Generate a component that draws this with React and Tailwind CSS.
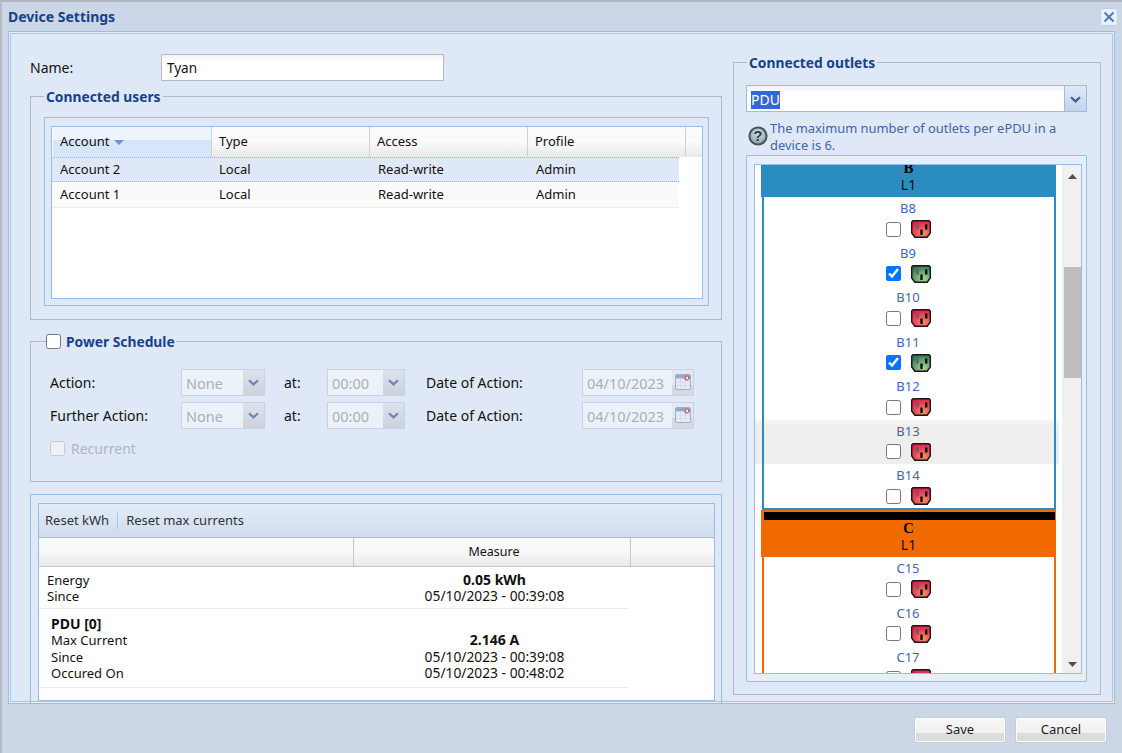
import React from "react";

const Chevron = ({ color = "#3f5f9a" }) => (
  <svg width="11" height="7" viewBox="0 0 11 7"><path d="M1 1.2 L5.5 5.4 L10 1.2" fill="none" stroke={color} strokeWidth="2.2" /></svg>
);

const Outlet = ({ on }) => {
  const id = on ? "og" : "or";
  return (
    <svg width="20" height="18" viewBox="0 0 20 18" className="shrink-0">
      <defs>
        <radialGradient id={id} cx="0.62" cy="0.78" r="0.8">
          <stop offset="0" stopColor={on ? "#a6d692" : "#f79064"} />
          <stop offset="0.5" stopColor={on ? "#6aa874" : "#e8505a"} />
          <stop offset="1" stopColor={on ? "#2f7050" : "#d9214e"} />
        </radialGradient>
      </defs>
      <path d="M2 .7 H18 L19.3 2 V13 L16.2 17.2 H3.8 L.7 13 V2 Z" fill={`url(#${id})`} stroke="#1c1416" strokeWidth="1.4" />
      <rect x="5.5" y="4.5" width="2" height="5" fill="#5c5c60" />
      <rect x="14" y="4.5" width="2.4" height="5" fill="#0c0c0c" />
      <rect x="9.3" y="9.5" width="2.4" height="5.5" fill="#0c0c0c" />
    </svg>
  );
};

const Row = ({ label, on, hover }) => (
  <div className="relative h-[44.5px] flex flex-col items-center shrink-0 pr-[2px]">
    {hover && <div className="absolute -left-[9px] -right-[5px] inset-y-0 -z-10 bg-[linear-gradient(#f6f6f6,#eeeeee_15%)]" />}
    <div className="h-[22px] leading-[22px] text-[#3d68b3]">{label}</div>
    <div className="flex items-center gap-[10px] h-[20px]">
      <input type="checkbox" defaultChecked={on} className="w-[15px] h-[15px] m-0" />
      <Outlet on={on} />
    </div>
  </div>
);

const Section = ({ name, borderClass, bgClass, rows, last }) => (
  <div className="w-[295px] ml-[6px]">
    <div className={`h-[47px] pt-[2px] ${bgClass} flex flex-col items-center`}>
      <div className="h-[8px] w-[291px] ml-[2px] bg-black shrink-0" />
      <div className="font-['Liberation_Serif',serif] font-bold text-[15px] leading-[17px] text-black">{name}</div>
      <div className="leading-[16px] text-[14px] text-[#1a1000]">L1</div>
    </div>
    <div className={`border-x-2 ${last ? "" : "border-b-2 h-[313px]"} ${borderClass} ml-[1px]`}>
      {rows.map((r) => <Row key={r.l} label={r.l} on={r.on} hover={r.hover} />)}
    </div>
  </div>
);

const DisabledSelect = ({ value, width, cal }) => (
  <div className={`${width} h-[27px] flex border border-[#c7d2e4] bg-[#edf2fa] text-[#a9afb8] text-[14.5px]`}>
    <div className="flex-1 pl-[4px] leading-[27px]">{value}</div>
    <div className={`w-[21px] ${cal ? "bg-[linear-gradient(#e4e9f1,#e4e9f1_60%,#d5dae2_60%)] items-start pt-[4px]" : "bg-gradient-to-b from-[#dde3ed] to-[#ccd2dc] pt-[9px]"} flex items-start justify-center`}>
      {cal ? (
        <svg width="16" height="16" viewBox="0 0 16 16">
          <rect x=".5" y=".5" width="15" height="15" rx="1.5" fill="#e8edf5" stroke="#a0aec8" />
          <rect x="1" y="1" width="14" height="3.5" fill="#96a9c8" />
          <path d="M1 8h14M1 11.5h14M5.5 5v10M10 5v10" stroke="#d3dae6" />
          <circle cx="12" cy="4" r="2" fill="#f4e8ea" stroke="#b8525e" strokeWidth="1.2" />
        </svg>
      ) : <Chevron color="#6d87b5" />}
    </div>
  </div>
);

const Legend = ({ children, className = "" }) => (
  <legend className={`h-[17px] leading-[17px] font-bold text-[#15428b] text-[13.8px] ${className}`}>{children}</legend>
);

const HeadCell = ({ w, children, active }) => (
  <div className={`${w} h-full border-r border-[#d0d0d0] ${active ? "bg-[linear-gradient(#edf4fe_0%,#edf4fe_45%,#d5e5fa_45%,#d5e5fa_100%)]" : "bg-[linear-gradient(#fbfbfb,#fafafa_50%,#e9e9e9)]"} pl-[7px] leading-[29px] shrink-0`}>
    {children}
  </div>
);

const ScheduleRow = ({ label, className = "" }) => (
  <div className={`flex items-center h-[27px] text-[14px] ${className}`}>
    <div className="w-[131px]">{label}</div>
    <DisabledSelect value="None" width="w-[84px]" />
    <div className="w-[62px] pl-[19px]">at:</div>
    <DisabledSelect value="00:00" width="w-[78px]" />
    <div className="w-[177px] pl-[21px]">Date of Action:</div>
    <DisabledSelect value="04/10/2023" width="w-[112px]" cal />
  </div>
);

const Btn = ({ children }) => (
  <button className="w-[92px] h-[26px] rounded-[3px] border border-[#c8ccd2] bg-[linear-gradient(#f7f7f7_0%,#f0f0f0_62%,#dcdcdc_62%,#dcdcdc_100%)] shadow-[inset_0_0_0_1px_#ffffff] text-[#222]">{children}</button>
);

export default function App() {
  return (
    <div className="w-[1122px] h-[753px] overflow-hidden bg-[#cbd7e6] border-t-2 border-l-2 border-t-[#b0b6bf] border-l-[#b4bbc6] font-['Noto_Sans',sans-serif] text-[13px] text-[#111] flex flex-col">
      {/* title */}
      <div className="h-[29px] shrink-0 flex items-center justify-between pl-[6px] pr-[4px]">
        <div className="font-bold text-[#15428b] text-[14px]">Device Settings</div>
        <button className="w-[18px] h-[18px] rounded-[3px] border border-[#bcd0ee] bg-[#e9f0fb] flex items-center justify-center">
          <svg width="12" height="12" viewBox="0 0 12 12"><path d="M1.5 1.5 L10.5 10.5 M10.5 1.5 L1.5 10.5" stroke="#5078b8" strokeWidth="2" /></svg>
        </button>
      </div>

      {/* body */}
      <div className="ml-[6px] w-[1107px] h-[673px] shrink-0 border border-[#99bce8] p-[1px] bg-[#e6eefa]">
        <div className="h-full border border-[#a9c5ec] bg-[#dfe8f6] flex pl-[19px] pt-[20px]">
          {/* left */}
          <div className="w-[692px] shrink-0 flex flex-col">
            <div className="flex items-center h-[27px] shrink-0 text-[14px]">
              <div className="w-[131px]">Name:</div>
              <div className="w-[283px] h-[27px] border border-[#b5b8c8] bg-[linear-gradient(#f2f2f2,#ffffff_25%)] pl-[5px] leading-[26px] text-[13.5px]">Tyan</div>
            </div>

            <fieldset className="mt-[7px] h-[232px] border border-[#b5b8c8] pl-[13px] shrink-0">
              <Legend className="px-[2px]">Connected users</Legend>
              <div className="mt-[12px] w-[665px] h-[189px] border border-[#99bce8] pt-[8px] pl-[6px]">
                <div className="w-[652px] h-[173px] border border-[#99bce8] bg-white">
                  <div className="h-[30px] flex pl-[1px]">
                    <HeadCell w="w-[159px]" active>
                      Account <span className="inline-block ml-[1px] align-middle w-0 h-0 border-x-[5px] border-x-transparent border-t-[5px] border-t-[#6f93cf]" />
                    </HeadCell>
                    <HeadCell w="w-[158px]">Type</HeadCell>
                    <HeadCell w="w-[158px]">Access</HeadCell>
                    <HeadCell w="w-[158px]">Profile</HeadCell>
                    <div className="flex-1 bg-[linear-gradient(#fbfbfb,#fafafa_50%,#e9e9e9)]" />
                  </div>
                  <div className="w-[627px] h-[25px] flex items-center bg-[#dfe8f6] border-y border-dotted border-[#8fb0e0]">
                    <div className="w-[167px] pl-[8px]">Account 2</div><div className="w-[159px]">Local</div><div className="w-[158px]">Read-write</div><div>Admin</div>
                  </div>
                  <div className="w-[627px] h-[26px] flex items-center bg-[#fafafa] border-b border-[#ededed]">
                    <div className="w-[167px] pl-[8px]">Account 1</div><div className="w-[159px]">Local</div><div className="w-[158px]">Read-write</div><div>Admin</div>
                  </div>
                </div>
              </div>
            </fieldset>

            <fieldset className="mt-[13px] h-[149px] border border-[#b5b8c8] pl-[15px] shrink-0">
              <Legend className="flex items-center gap-[5px] pr-[1px]">
                <input type="checkbox" className="w-[15px] h-[15px] m-0" /> Power Schedule
              </Legend>
              <div className="mt-[19px] pl-[4px]">
                <ScheduleRow label="Action:" />
                <ScheduleRow label="Further Action:" className="mt-[6px]" />
                <div className="flex items-center mt-[9px] h-[20px] text-[14px] text-[#b0b5bd]">
                  <input type="checkbox" disabled className="w-[15px] h-[15px] m-0 mr-[6px]" />
                  Recurrent
                </div>
              </div>
            </fieldset>

            <div className="mt-[12px] h-[209px] border border-b-0 border-[#99bce8] pl-[7px] pt-[8px] shrink-0">
              <div className="w-[677px] h-[198px] border border-[#99bce8] bg-white">
                <div className="h-[34px] flex items-center pl-[6px] bg-[linear-gradient(#e3ecf8,#cfdcee)] border-b border-[#99bce8] text-[#333]">
                  <span>Reset kWh</span>
                  <span className="w-px h-[16px] bg-[#a9c5ec] mx-[8px]" />
                  <span>Reset max currents</span>
                </div>
                <div className="h-[29px] flex bg-[linear-gradient(#fbfbfb,#f8f8f8_50%,#e9e9e9)] border-b border-[#c5c5c5]">
                  <div className="w-[315px] border-r border-[#c9c9c9]" />
                  <div className="w-[277px] border-r border-[#c9c9c9] text-center leading-[28px] pl-[4px] text-[12.5px]">Measure</div>
                </div>
                <div className="w-[589px] flex h-[42px] border-b border-[#ededed] leading-[16px] pt-[5px]">
                  <div className="w-[315px] pl-[8px]">Energy<br />Since</div>
                  <div className="w-[274px] pl-[7px] text-center text-[13.8px]"><b className="text-[14px]">0.05 kWh</b><br />05/10/2023 - 00:39:08</div>
                </div>
                <div className="w-[589px] flex h-[79px] border-b border-[#ededed] leading-[16.3px] pt-[7px]">
                  <div className="w-[315px] pl-[12px]"><b className="text-[14px]">PDU [0]</b><br />Max Current<br />Since<br />Occured On</div>
                  <div className="w-[274px] pl-[7px] text-center text-[13.8px]"><br /><b className="text-[14px]">2.146 A</b><br />05/10/2023 - 00:39:08<br />05/10/2023 - 00:48:02</div>
                </div>
              </div>
            </div>
          </div>

          {/* right */}
          <fieldset className="ml-[11px] w-[368px] h-[641px] border border-[#b5b8c8] pl-[12px] shrink-0">
            <Legend className="px-[2px] ml-[1px]">Connected outlets</Legend>
            <div className="mt-[14px] w-[341px] h-[27px] border border-[#99bce8] flex bg-[linear-gradient(#eef2f6,#ffffff_30%)]">
              <div className="flex-1 pl-[4px] pt-[3px] text-[14px]"><span className="inline-block leading-[18px] bg-[#3366d6] text-white">PDU</span></div>
              <div className="w-[22px] border-l border-[#99bce8] bg-[linear-gradient(#dfe9f6,#c3d3e8)] flex items-start justify-center pt-[10px]"><Chevron /></div>
            </div>
            <div className="h-[43px] flex pt-[8px] pl-[2px]">
              <svg width="20" height="20" viewBox="0 0 20 20" className="mt-[6px] mr-[2px] shrink-0">
                <defs>
                  <radialGradient id="hq" cx="0.5" cy="0.35" r="0.7">
                    <stop offset="0" stopColor="#d5e2e6" />
                    <stop offset="1" stopColor="#7f9aa3" />
                  </radialGradient>
                </defs>
                <circle cx="10" cy="10" r="8.6" fill="url(#hq)" stroke="#4a5254" strokeWidth="2" />
                <text x="10" y="15" textAnchor="middle" fontSize="14.5" fontWeight="700" fontFamily="Liberation Sans" fill="#2a3a44">?</text>
              </svg>
              <div className="text-[#3f65a5] leading-[17px] text-[12.9px]">The maximum number of outlets per ePDU in a<br />device is 6.</div>
            </div>
            <div className="w-[341px] h-[527px] border border-[#99bce8] rounded-[2px] pt-[8px] pl-[7px] bg-[#e6eefa]">
              <div className="w-[328px] h-[510px] border border-[#99bce8] bg-white flex overflow-hidden">
                <div className="w-[307px] shrink-0 overflow-hidden relative isolate bg-white">
                  <div className="-mt-[15px]">
                    <Section name="B" bgClass="bg-[#2a8cc0]" borderClass="border-[#2a8cc0]" rows={[
                      { l: "B8" }, { l: "B9", on: true }, { l: "B10" }, { l: "B11", on: true }, { l: "B12" }, { l: "B13", hover: true }, { l: "B14" },
                    ]} />
                    <Section name="C" bgClass="bg-[#f06a00]" borderClass="border-[#f06a00]" last rows={[
                      { l: "C15" }, { l: "C16" }, { l: "C17" },
                    ]} />
                  </div>
                </div>
                <div className="flex-1 bg-[#f0f0f0] flex flex-col">
                  <div className="h-[23px] flex items-center justify-center shrink-0 pl-[2px]">
                    <svg width="9" height="5" viewBox="0 0 9 5"><path d="M4.5 0 L9 5 H0 Z" fill="#505050" /></svg>
                  </div>
                  <div className="mt-[79px] ml-[2px] h-[111px] bg-[#bebebe] shrink-0" />
                  <div className="mt-auto h-[18px] flex items-center justify-center shrink-0 pl-[2px]">
                    <svg width="9" height="5" viewBox="0 0 9 5"><path d="M0 0 H9 L4.5 5 Z" fill="#505050" /></svg>
                  </div>
                </div>
              </div>
            </div>
          </fieldset>
        </div>
      </div>

      {/* footer */}
      <div className="flex-1 flex justify-end items-start pt-[13px] pr-[15px] gap-[9px]">
        <Btn>Save</Btn>
        <Btn>Cancel</Btn>
      </div>
    </div>
  );
}
